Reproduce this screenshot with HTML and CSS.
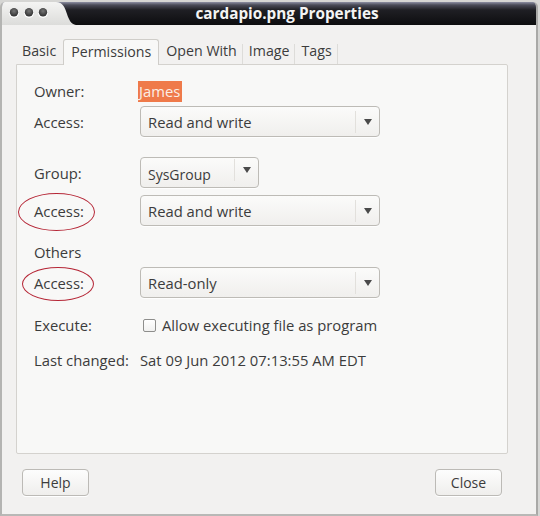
FILE: index.html
```html
<!DOCTYPE html>
<html>
<head>
<meta charset="utf-8">
<link rel="stylesheet" href="styles.css">
</head>
<body>
<div class="window">
  <div class="titlebar">
    <svg class="tb-left" width="76" height="23" viewBox="0 0 76 23">
      <defs>
        <linearGradient id="lg" x1="0" y1="0" x2="0" y2="1">
          <stop offset="0" stop-color="#f4f4f3"/>
          <stop offset="1" stop-color="#dcdcda"/>
        </linearGradient>
        <radialGradient id="dot" cx="0.5" cy="0.35" r="0.6">
          <stop offset="0" stop-color="#777"/>
          <stop offset="1" stop-color="#333"/>
        </radialGradient>
      </defs>
      <path d="M0 0 H54 C61 0 63 6 65 12 C67 18 69 22 74 23 H0 Z" fill="url(#lg)"/>
      <circle cx="12" cy="11" r="5" fill="#fdfdfd"/>
      <circle cx="27" cy="11" r="5" fill="#fdfdfd"/>
      <circle cx="41" cy="11" r="5" fill="#fdfdfd"/>
      <circle cx="12" cy="10.3" r="4.2" fill="url(#dot)"/>
      <circle cx="27" cy="10.3" r="4.2" fill="url(#dot)"/>
      <circle cx="41" cy="10.3" r="4.2" fill="url(#dot)"/>
    </svg>
    <div class="title">cardapio.png Properties</div>
  </div>
  <div class="body">
    <div class="tabs">
      <div class="tab first">Basic</div>
      <div class="tab active">Permissions</div>
      <div class="tab">Open With</div>
      <div class="tab">Image</div>
      <div class="tab">Tags</div>
    </div>
    <div class="panel">
      <div class="row r-owner">
        <div class="label">Owner:</div>
        <div class="value"><span class="sel">James</span></div>
      </div>
      <div class="row r-access1">
        <div class="label">Access:</div>
        <div class="combo wide"><span class="ctext">Read and write</span><span class="carrow"></span></div>
      </div>
      <div class="row r-group">
        <div class="label">Group:</div>
        <div class="combo narrow"><span class="ctext small">SysGroup</span><span class="carrow"></span></div>
      </div>
      <div class="row r-access2">
        <div class="label"><span class="circled c1">Access:</span></div>
        <div class="combo wide"><span class="ctext">Read and write</span><span class="carrow"></span></div>
      </div>
      <div class="row r-others">
        <div class="label">Others</div>
      </div>
      <div class="row r-access3">
        <div class="label"><span class="circled c2">Access:</span></div>
        <div class="combo wide"><span class="ctext">Read-only</span><span class="carrow"></span></div>
      </div>
      <div class="row r-exec">
        <div class="label">Execute:</div>
        <div class="value check"><span class="box"></span>Allow executing file as program</div>
      </div>
      <div class="row r-last">
        <div class="label">Last changed:</div>
        <div class="value">Sat 09 Jun 2012 07:13:55 AM EDT</div>
      </div>
    </div>
    <div class="buttons">
      <div class="btn">Help</div>
      <div class="btn">Close</div>
    </div>
  </div>
</div>
</body>
</html>
```
FILE: styles.css
```css
* { box-sizing: border-box; }
html, body { margin: 0; padding: 0; }
body {
  width: 540px;
  height: 516px;
  background: #d6d6d4;
  font-family: "Open Sans", "DejaVu Sans", sans-serif;
  font-size: 14px;
  color: #3c3c3c;
  overflow: hidden;
}
.window {
  width: 538px;
  height: 514px;
  margin-top: 2px;
  border-left: 2px solid #b4b4b2;
  border-right: 2px solid #a9a9a7;
  border-bottom: 2px solid #b8b8b6;
  background: #f2f1f0;
  display: flex;
  flex-direction: column;
  border-radius: 5px 5px 0 0;
  overflow: hidden;
}
.titlebar {
  height: 23px;
  display: flex;
  align-items: stretch;
  background: linear-gradient(#8d8fa3 0px, #4a4b58 3px, #1f1f24 8px, #0d0d0f 23px);
}
.tb-left { display: block; flex: none; }
.title {
  flex: 1;
  text-align: center;
  color: #f4f4f4;
  font-weight: bold;
  font-size: 15.3px;
  line-height: 23px;
  padding-right: 40px;
}
.body {
  flex: 1;
  display: flex;
  flex-direction: column;
  padding: 14px 28px 0 14px;
}
.tabs {
  display: flex;
  align-items: flex-end;
  height: 25px;
}
.tab {
  padding: 0 6px;
  height: 25px;
  line-height: 24px;
  position: relative;
  color: #3c3c3c;
  font-size: 14.2px;
}
.tab::after {
  content: "";
  position: absolute;
  right: 0;
  top: 5px;
  bottom: 0;
  width: 1px;
  background: #dddcd9;
}
.tab.first { padding-left: 6px; padding-right: 7px; }
.tab.active {
  background: #f8f8f7;
  border: 1px solid #cfcdc9;
  border-bottom: none;
  border-radius: 3px 3px 0 0;
  padding: 0 7px;
  margin-bottom: -1px;
  height: 26px;
  z-index: 1;
}
.tab.active::after, .tab.first::after { display: none; }
.tab.active + .tab { margin-left: 1px; }
.panel {
  height: 390px;
  background: #f8f8f7;
  border: 1px solid #d4d2ce;
  border-radius: 0 2px 2px 2px;
  padding: 17px 0 0 17px;
  display: flex;
  flex-direction: column;
  font-size: 14.8px;
}
.row { display: flex; align-items: center; }
.label { width: 106px; flex: none; }
.r-owner { height: 18px; }
.r-access1 { margin-top: 6px; }
.r-group { margin-top: 20px; }
.r-access2 { margin-top: 7px; }
.r-others { margin-top: 16px; height: 20px; }
.r-access3 { margin-top: 5px; }
.r-exec { margin-top: 17px; height: 20px; }
.r-last { margin-top: 15px; height: 20px; }
.sel {
  background: #ef7a4a;
  color: #fbeee6;
  padding: 0 2px 1px 1px;
  margin-left: -2px;
}
.combo {
  height: 31px;
  border: 1px solid #bdbbb6;
  border-radius: 4px;
  background: linear-gradient(#fbfbfa, #f0efed);
  display: flex;
  align-items: center;
  box-shadow: 0 1px 0 rgba(255,255,255,0.8);
}
.combo.wide { width: 240px; }
.combo.narrow { width: 119px; }
.ctext { flex: 1; padding-left: 7px; }
.ctext.small { font-size: 14px; padding-top: 3px; }
.carrow {
  width: 24px;
  height: 22px;
  border-left: 1px solid #e2e0dc;
  position: relative;
  flex: none;
}
.carrow::after {
  content: "";
  position: absolute;
  left: 8px;
  top: 8px;
  border-left: 4px solid transparent;
  border-right: 4px solid transparent;
  border-top: 6px solid #4a4a4a;
}
.combo.narrow .carrow { height: 22px; margin-bottom: 6px; }
.circled { position: relative; }
.circled::before {
  content: "";
  position: absolute;
  border: 1.5px solid #b52636;
  border-radius: 50%;
}
.c1::before { left: -16px; top: -8px; width: 75px; height: 36px; }
.c2::before { left: -12px; top: -6px; width: 70px; height: 32px; }
.check { display: flex; align-items: center; }
.box {
  width: 13px;
  height: 13px;
  border: 1px solid #8e8e8c;
  border-radius: 2px;
  background: linear-gradient(#fff, #f1f1f0);
  margin: 0 6px 0 3px;
}
.buttons {
  display: flex;
  justify-content: space-between;
  margin-top: 15px;
  padding: 0 6px 0 6px;
}
.btn {
  width: 67px;
  height: 27px;
  border: 1px solid #bcbab6;
  border-radius: 4px;
  background: linear-gradient(#fdfdfd, #efeeec);
  text-align: center;
  line-height: 25px;
  box-shadow: 0 1px 0 #fff;
}
```
